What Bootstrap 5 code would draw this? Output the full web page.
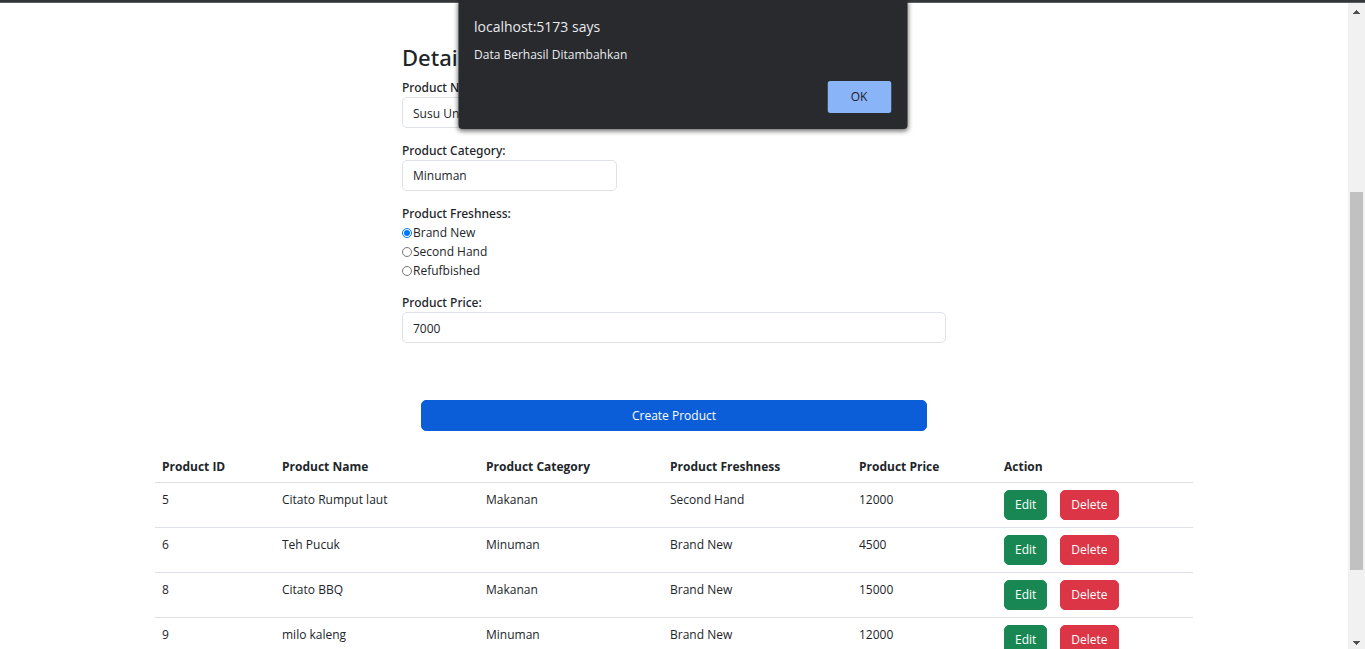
<!DOCTYPE html>
<html lang="en">
<head>
<meta charset="utf-8">
<meta name="viewport" content="width=device-width, initial-scale=1">
<title>Product Detail</title>
<link href="https://cdn.jsdelivr.net/npm/bootstrap@5.3.0/dist/css/bootstrap.min.css" rel="stylesheet">
<style>
  body { font: 400 12px/20px "Open Sans", "Noto Sans", sans-serif; color: #212529; }
  .top-edge { height: 3px; background: #35363a; border-bottom: 1px solid #5b5d60; }
  .page-body { padding-top: 41px; }
  .page-wrap { max-width: 1056px; padding: 0 9px; }
  .product-form { max-width: 544px; }
  .product-form h1 { font: 500 22px/27px "Noto Sans", "Open Sans", sans-serif; margin-bottom: 7px; }
  .field { margin-bottom: 13px; }
  .field-label { display: block; font: 500 12px/19px "Noto Sans", "Open Sans", sans-serif; margin: 0; }
  .form-control { font-size: 12px; line-height: 20px; padding: 5px 10px 4px; border-radius: 5px; height: 31px; }
  .short-control { width: 215px; }
  .choice { display: flex; align-items: center; height: 19px; }
  .choice input { width: 10px; height: 10px; margin: 0 1px 0 0; }
  .btn { font-size: 12px; line-height: 20px; padding: 4px 10px; border-radius: 5px; }
  .create-row { margin: 57px 19px 20px; }
  .create-btn { --bs-btn-bg: #0b5ed7; --bs-btn-border-color: #0b5ed7; padding: 5px 10px 4px; }
  .product-table > :not(caption) > * > * { padding: 7px; }
  .product-table > thead > tr > th { padding: 6px 7px 5px; }
  .actions { gap: 13px; }
  .scroll-track { width: 17px; background: #f1f1f1; padding: 7px 2px 4px; }
  .scroll-track svg { display: block; flex: none; margin: 0 auto; }
  .scroll-thumb { background: #c1c1c1; flex: 378; }
  .alert-box { top: 0; left: 50%; transform: translateX(-50%); width: 449px; max-width: 100%; padding: 16px; background: #292a2d; color: #e8eaed; border-radius: 0 0 4px 4px; box-shadow: 0 2px 5px rgba(0,0,0,.6); }
  .alert-box h2 { font-size: 14px; line-height: 22px; font-weight: 400; margin: 0 0 7px; }
  .alert-box p { margin: 0 0 16px; }
  .ok-btn { width: 64px; height: 32px; padding: 0; border-radius: 3px; background: #8ab4f8; color: #202124; }
  .ok-btn:hover, .ok-btn:focus { background: #8ab4f8; color: #202124; }
</style>
</head>
<body class="vh-100 overflow-hidden d-flex flex-column">
<div class="top-edge flex-shrink-0"></div>
<div class="d-flex flex-grow-1 overflow-hidden">
  <main class="page-body flex-grow-1 overflow-hidden">
    <div class="page-wrap mx-auto">
      <form class="product-form mx-auto">
        <h1>Detail</h1>
        <div class="field">
          <label class="field-label" for="name">Product Name:</label>
          <input class="form-control short-control" type="text" id="name" value="Susu Unta">
        </div>
        <div class="field">
          <label class="field-label" for="category">Product Category:</label>
          <select class="form-control short-control" id="category"><option>Minuman</option><option>Makanan</option></select>
        </div>
        <div class="field" role="radiogroup" aria-labelledby="fresh">
          <div class="field-label" id="fresh">Product Freshness:</div>
          <div class="choice"><input type="radio" name="fresh" id="f1" checked><label for="f1">Brand New</label></div>
          <div class="choice"><input type="radio" name="fresh" id="f2"><label for="f2">Second Hand</label></div>
          <div class="choice"><input type="radio" name="fresh" id="f3"><label for="f3">Refufbished</label></div>
        </div>
        <div class="field mb-0">
          <label class="field-label" for="price">Product Price:</label>
          <input class="form-control" type="text" id="price" value="7000">
        </div>
        <div class="create-row d-grid">
          <button class="btn btn-primary create-btn" type="button">Create Product</button>
        </div>
      </form>
      <table class="table product-table">
        <colgroup><col style="width:120px"><col style="width:204px"><col style="width:184px"><col style="width:189px"><col style="width:145px"><col style="width:196px"></colgroup>
        <thead>
          <tr><th>Product ID</th><th>Product Name</th><th>Product Category</th><th>Product Freshness</th><th>Product Price</th><th>Action</th></tr>
        </thead>
        <tbody>
          <tr><td>5</td><td>Citato Rumput laut</td><td>Makanan</td><td>Second Hand</td><td>12000</td><td><div class="d-flex actions"><button class="btn btn-success" type="button">Edit</button><button class="btn btn-danger" type="button">Delete</button></div></td></tr>
          <tr><td>6</td><td>Teh Pucuk</td><td>Minuman</td><td>Brand New</td><td>4500</td><td><div class="d-flex actions"><button class="btn btn-success" type="button">Edit</button><button class="btn btn-danger" type="button">Delete</button></div></td></tr>
          <tr><td>8</td><td>Citato BBQ</td><td>Makanan</td><td>Brand New</td><td>15000</td><td><div class="d-flex actions"><button class="btn btn-success" type="button">Edit</button><button class="btn btn-danger" type="button">Delete</button></div></td></tr>
          <tr><td>9</td><td>milo kaleng</td><td>Minuman</td><td>Brand New</td><td>12000</td><td><div class="d-flex actions"><button class="btn btn-success" type="button">Edit</button><button class="btn btn-danger" type="button">Delete</button></div></td></tr>
        </tbody>
      </table>
    </div>
  </main>
  <div class="scroll-track d-flex flex-column flex-shrink-0" aria-hidden="true">
    <svg width="7" height="4" viewBox="0 0 7 4" shape-rendering="crispEdges"><path fill="#505050" d="M3 0h1v1h1v1h1v1h1v1H0V3h1V2h1V1h1z"/></svg>
    <div style="flex:178"></div>
    <div class="scroll-thumb"></div>
    <div style="flex:71"></div>
    <svg width="7" height="4" viewBox="0 0 7 4" shape-rendering="crispEdges"><path fill="#505050" d="M0 0h7v1H6v1H5v1H4v1H3V3H2V2H1V1H0z"/></svg>
  </div>
</div>
<div class="alert-box position-absolute" role="alertdialog" aria-labelledby="alert-title">
  <h2 id="alert-title">localhost:5173 says</h2>
  <p>Data Berhasil Ditambahkan</p>
  <div class="d-flex justify-content-end"><button class="btn ok-btn" type="button">OK</button></div>
</div>
<script src="https://cdn.jsdelivr.net/npm/bootstrap@5.3.0/dist/js/bootstrap.bundle.min.js"></script>
</body>
</html>
